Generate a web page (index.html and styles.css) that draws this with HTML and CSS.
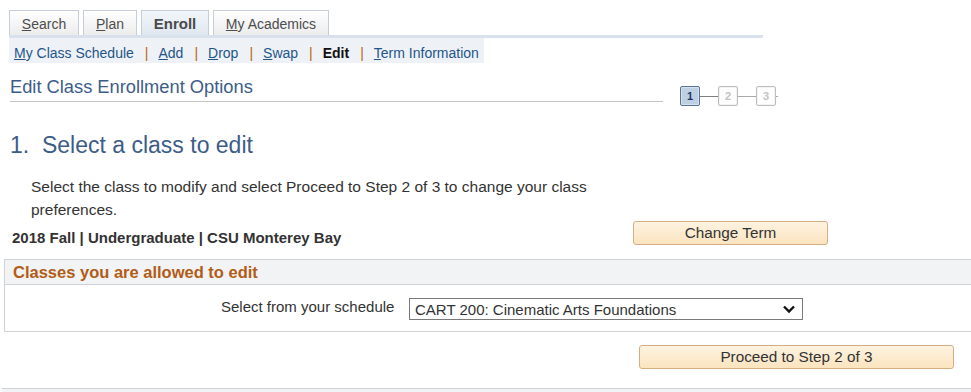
FILE: index.html
```html
<!DOCTYPE html>
<html lang="en">
<head>
<meta charset="utf-8">
<title>Edit Class Enrollment Options</title>
<link rel="stylesheet" href="styles.css">
</head>
<body>
<div class="page">
  <nav class="tabs">
    <a class="tab tab-search"><u>S</u>earch</a>
    <a class="tab tab-plan"><u>P</u>lan</a>
    <a class="tab tab-active">Enroll</a>
    <a class="tab tab-acad"><u>M</u>y Academics</a>
  </nav>
  <div class="tabline"></div>
  <div class="subnav">
    <a class="sublink"><u>M</u>y Class Schedule</a><span class="sep">|</span>
    <a class="sublink"><u>A</u>dd</a><span class="sep">|</span>
    <a class="sublink"><u>D</u>rop</a><span class="sep">|</span>
    <a class="sublink"><u>S</u>wap</a><span class="sep">|</span>
    <span class="subcur">Edit</span><span class="sep">|</span>
    <a class="sublink"><u>T</u>erm Information</a>
  </div>

  <div class="header-row">
    <div class="page-title">Edit Class Enrollment Options</div>
    <div class="steps">
      <span class="step step-on">1</span>
      <span class="conn conn-dark"></span>
      <span class="step">2</span>
      <span class="conn"></span>
      <span class="step">3</span>
      <span class="conn conn-tail"></span>
    </div>
  </div>

  <h1 class="step-title">1.&nbsp; Select a class to edit</h1>
  <p class="instr">Select the class to modify and select Proceed to Step 2 of 3 to change your class preferences.</p>

  <div class="term-row">
    <div class="term">2018 Fall | Undergraduate | CSU Monterey Bay</div>
    <button class="btn btn-term">Change Term</button>
  </div>

  <section class="box">
    <div class="box-head">Classes you are allowed to edit</div>
    <div class="box-body">
      <span class="sel-label">Select from your schedule</span>
      <div class="select">
        <span class="sel-text">CART 200: Cinematic Arts Foundations</span>
        <svg class="chev" width="14" height="10" viewBox="0 0 14 10"><path d="M2 2.5 L7 7.5 L12 2.5" fill="none" stroke="#111" stroke-width="2.4"/></svg>
      </div>
    </div>
  </section>

  <div class="proceed-row">
    <button class="btn btn-proceed">Proceed to Step 2 of 3</button>
  </div>

  <div class="bottom-band"></div>
</div>
</body>
</html>
```

FILE: styles.css
```css
html, body {
  margin: 0;
  padding: 0;
  overflow: hidden;
  background: #ffffff;
}
body {
  font-family: "Liberation Sans", Arial, sans-serif;
  color: #333333;
  font-size: 14px;
}
.page {
  width: 990px;
}
.tabs {
  display: flex;
  gap: 4px;
  padding: 10px 0 0 9px;
  height: 25px;
}
.tab {
  box-sizing: border-box;
  height: 25px;
  padding-top: 1px;
  border: 1px solid #c5ced8;
  border-bottom: none;
  background: linear-gradient(#ffffff, #ececec);
  display: flex;
  align-items: center;
  justify-content: center;
  font-size: 14px;
  color: #4d4d4d;
  text-decoration: none;
}
.tab u { text-decoration: underline; }
.tab-search { width: 70px; }
.tab-plan { width: 54px; }
.tab-active {
  width: 68px;
  background: linear-gradient(#f2f6fa, #dfe7f0);
  font-weight: bold;
  font-size: 15px;
  color: #4a4a4a;
}
.tab-acad { width: 116px; }
.tabline {
  margin-left: 9px;
  width: 754px;
  height: 3px;
  background: #d8e1ec;
}
.subnav {
  margin: 0 0 0 9px;
  display: inline-flex;
  align-items: center;
  height: 25px;
  padding: 4px 5px 0;
  background: #eef2f6;
  font-size: 14px;
  box-sizing: border-box;
}
.sublink {
  color: #1f5589;
  text-decoration: none;
}
.sublink u { text-decoration: underline; }
.subcur {
  font-weight: bold;
  color: #111111;
}
.sep {
  color: #b8660f;
  margin: 0 10px 0 11px;
}
.header-row {
  display: flex;
  align-items: flex-start;
  margin-top: 14px;
  margin-left: 10px;
}
.page-title {
  width: 653px;
  font-size: 18.3px;
  line-height: 20px;
  color: #3c5d88;
  padding-bottom: 4px;
  border-bottom: 1px solid #c4c4c4;
}
.steps {
  display: flex;
  align-items: center;
  align-self: flex-end;
  margin-left: 17px;
  margin-bottom: -4px;
}
.step {
  box-sizing: border-box;
  width: 20px;
  height: 20px;
  border: 1px solid #bdbdbd;
  border-radius: 2px;
  background: #ffffff;
  box-shadow: inset 0 0 0 1px #f3f3f3;
  display: flex;
  align-items: center;
  justify-content: center;
  font-size: 11px;
  font-weight: bold;
  color: #c2c2c2;
}
.step-on {
  border-color: #5b7399;
  background: #bfd0e2;
  box-shadow: inset 0 0 0 1px #d6e2ee;
  color: #1d3766;
}
.conn {
  width: 18px;
  height: 1px;
  background: #a9a9a9;
}
.conn-dark { background: #7f7f7f; }
.conn-tail { width: 2px; }
.step-title {
  margin: 30px 0 0 10px;
  font-size: 23px;
  line-height: 26px;
  font-weight: normal;
  color: #3c5d88;
}
.instr {
  margin: 17px 0 0 31px;
  width: 590px;
  font-size: 15.5px;
  line-height: 23px;
  color: #333333;
}
.term-row {
  display: flex;
  align-items: flex-end;
  margin-left: 12px;
}
.term {
  width: 621px;
  font-weight: bold;
  font-size: 15px;
  line-height: 17px;
  color: #333333;
  margin-bottom: -1px;
}
.btn {
  box-sizing: border-box;
  height: 24px;
  border: 1px solid #d6ae84;
  border-radius: 3px;
  background: linear-gradient(#fdf3e0, #fbe4bf);
  font-family: "Liberation Sans", Arial, sans-serif;
  font-size: 15.3px;
  color: #333333;
  padding: 0;
}
.btn-term { width: 195px; }
.box {
  margin: 14px 0 0 4px;
  border: 1px solid #cfd3d8;
  border-right: none;
}
.box-head {
  height: 24px;
  background: #f1f3f5;
  border-bottom: 1px solid #cfd3d8;
  padding-left: 8px;
  display: flex;
  align-items: center;
  font-weight: bold;
  font-size: 16.5px;
  color: #b35c16;
}
.box-body {
  display: flex;
  align-items: center;
  padding: 13px 0 11px 216px;
  height: 22px;
}
.sel-label {
  flex: none;
  width: 173px;
  white-space: nowrap;
  text-align: right;
  font-size: 15px;
  color: #333333;
  margin-top: -6px;
}
.select {
  flex: none;
  box-sizing: border-box;
  margin-left: 15px;
  width: 394px;
  height: 22px;
  border: 1px solid #7a7a7a;
  display: flex;
  align-items: center;
  justify-content: space-between;
  padding: 0 6px 0 5px;
  font-size: 15px;
  color: #333333;
}
.chev { display: block; }
.proceed-row {
  margin: 13px 0 0 639px;
}
.btn-proceed { width: 315px; }
.bottom-band {
  margin: 19px 0 0 2px;
  height: 10px;
  border-top: 1px solid #cfd3d8;
  background: #f1f3f5;
}
```
